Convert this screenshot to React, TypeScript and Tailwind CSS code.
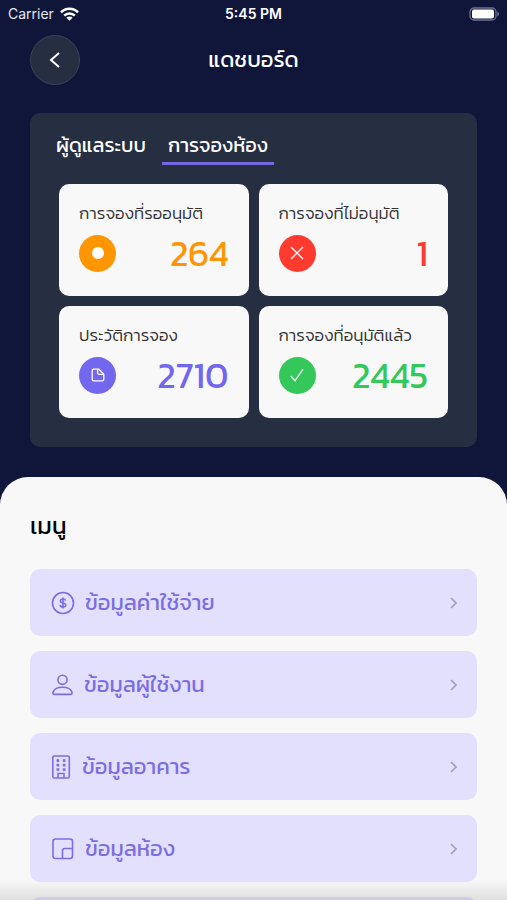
import type { ReactNode } from "react";

const stats = [
  { id: "pending", label: "การจองที่รออนุมัติ", value: 264, text: "text-[#ff9500]", bg: "bg-[#ff9500]" },
  { id: "rejected", label: "การจองที่ไม่อนุมัติ", value: 1, text: "text-[#ff3b30]", bg: "bg-[#ff3b30]" },
  { id: "history", label: "ประวัติการจอง", value: 2710, text: "text-[#7367f0]", bg: "bg-[#7367f0]" },
  { id: "approved", label: "การจองที่อนุมัติแล้ว", value: 2445, text: "text-[#34c759]", bg: "bg-[#34c759]" },
];

const statIcons: Record<string, ReactNode> = {
  pending: <circle cx="8" cy="8" r="6" fill="currentColor" stroke="none" />,
  rejected: <path d="M2 2l12 12M14 2L2 14" />,
  history: (
    <>
      <path d="M2.2 3.6c0-.8.6-1.4 1.4-1.4h5.2l5 5v5.2c0 .8-.6 1.4-1.4 1.4H3.6c-.8 0-1.4-.6-1.4-1.4z" />
      <path d="M7.6 2.4v3.4c0 .9.6 1.5 1.5 1.5h4.4" />
    </>
  ),
  approved: <path d="M2 9l4 4.8L14 2.2" />,
};

const menu = [
  { id: "expense", label: "ข้อมูลค่าใช้จ่าย", iconWidth: 24 },
  { id: "users", label: "ข้อมูลผู้ใช้งาน", iconWidth: 23 },
  { id: "building", label: "ข้อมูลอาคาร", iconWidth: 21 },
  { id: "room", label: "ข้อมูลห้อง", iconWidth: 24 },
];

const menuIcons: Record<string, ReactNode> = {
  expense: (
    <>
      <circle cx="12" cy="12" r="10.5" />
      <path d="M14.6 9.7c-.2-1-1.2-1.7-2.6-1.7s-2.6.7-2.6 1.9c0 2.7 5.4 1.4 5.4 4.100 0 1.200-1.200 2-2.800 2s-2.700-.8-2.900-2M12 6.400v11.200" />
    </>
  ),
  users: (
    <>
      <circle cx="11.500" cy="6.800" r="4.600" />
      <path d="M3.700 21.400h15.600c1.500 0 2-.9 1.700-2.100-.9-3-4.700-5-9.500-5s-8.600 2-9.500 5c-.3 1.200.2 2.100 1.700 2.100z" />
    </>
  ),
  building: (
    <>
      <rect x="1.800" y="1" width="16.500" height="22" rx="1.500" />
      <path d="M7 23v-4.500h6V23" />
      <path
        d="M5.800 4.500H8v2.200H5.800zM12 4.500h2.200v2.200H12zM5.800 9H8v2.200H5.800zM12 9h2.200v2.200H12zM5.800 13.500H8v2.200H5.800zM12 13.500h2.200v2.200H12z"
        fill="currentColor"
        strokeWidth="0.5"
      />
    </>
  ),
  room: (
    <>
      <rect x="2" y="2" width="19.500" height="19.500" rx="2.500" />
      <path d="M11.500 21.500v-8c0-1.200.8-2 2-2h8" />
    </>
  ),
};

function StatusBar() {
  return (
    <div className="grid grid-cols-3 items-center h-7 px-2 text-sm font-['Inter',sans-serif]">
      <div className="flex items-center gap-1.5">
        <span className="text-gray-200">Carrier</span>
        <svg width="19" height="14" viewBox="0 0 19 14" fill="none" stroke="currentColor" strokeWidth="2.6">
          <path d="M1 5.300a12 12 0 0 1 17 0" />
          <path d="M4.200 8.700a7.500 7.500 0 0 1 10.600 0" />
          <path d="M9.500 13.800L6.400 10.700a4.400 4.400 0 0 1 6.200 0z" fill="currentColor" stroke="none" />
        </svg>
      </div>
      <span className="text-center font-semibold">5:45 PM</span>
      <svg className="justify-self-end" width="31" height="15" viewBox="0 0 31 15" fill="none">
        <rect x="2" y="1" width="26" height="12" rx="4" stroke="#6e708c" strokeWidth="1.3" />
        <rect x="4" y="2.5" width="22" height="9" rx="2" fill="#fff" />
        <path d="M29.3 4.500v5c1-.4 1.700-1.300 1.700-2.500s-.7-2.100-1.700-2.500z" fill="#6e708c" />
      </svg>
    </div>
  );
}

export default function App() {
  return (
    <div className="relative flex flex-col h-screen overflow-hidden bg-[#10153a] text-white font-['Kanit','Prompt','Noto_Sans_Thai',sans-serif]">
      <StatusBar />

      <header className="grid grid-cols-[50px_1fr_50px] items-center px-[30px] pt-[7px]">
        <button
          aria-label="ย้อนกลับ"
          className="flex items-center justify-center size-[50px] rounded-full bg-[#262e42] border border-[#3a4157]"
        >
          <svg width="24" height="24" viewBox="0 0 24 24" fill="none" stroke="currentColor" strokeWidth="2">
            <path d="M16 5l-8 7 8 7" />
          </svg>
        </button>
        <h1 className="text-center text-[22px] leading-8">แดชบอร์ด</h1>
      </header>

      {/* Booking summary */}
      <section className="mx-[30px] mt-7 pb-[29px] rounded-[10px] bg-[#262e42]">
        <div className="flex gap-[10px] px-5 pt-[14px]">
          <button className="px-1.5 h-[38px] text-[20px] border-b-3 border-transparent">ผู้ดูแลระบบ</button>
          <button className="px-1.5 h-[38px] text-[20px] border-b-3 border-[#7367e0]">การจองห้อง</button>
        </div>
        <div className="grid grid-cols-2 gap-[10px] px-[29px] pt-[19px]">
          {stats.map((s) => (
            <div key={s.id} className="h-[112px] px-5 pt-[17px] rounded-[10px] bg-[#f8f8f8]">
              <p className="text-[17px] leading-6 font-light text-[#333] whitespace-nowrap">{s.label}</p>
              <div className={`flex items-center justify-between mt-2 ${s.text}`}>
                <span className={`flex items-center justify-center size-[37px] rounded-full text-white ${s.bg}`}>
                  <svg width="16" height="16" viewBox="0 0 16 16" fill="none" stroke="currentColor" strokeWidth="1.3">
                    {statIcons[s.id]}
                  </svg>
                </span>
                <span className="text-[36px] leading-10">{s.value}</span>
              </div>
            </div>
          ))}
        </div>
      </section>

      {/* Menu sheet */}
      <main className="flex-1 min-h-0 mt-[30px] px-[30px] pt-[33px] rounded-t-[28px] bg-[#f8f8f8] overflow-hidden">
        <h2 className="text-[24px] leading-8 text-black">เมนู</h2>
        <nav className="flex flex-col gap-[15px] mt-[27px]">
          {menu.map((m) => (
            <a
              key={m.id}
              href="#"
              className="flex items-center gap-[10px] h-[67px] pl-[21px] pr-5 rounded-[10px] bg-[#e3e0fe] text-[#7b6ee2]"
            >
              <svg
                width={m.iconWidth}
                height="24"
                viewBox={`0 0 ${m.iconWidth} 24`}
                fill="none"
                stroke="currentColor"
                strokeWidth="1.6"
              >
                {menuIcons[m.id]}
              </svg>
              <span className="flex-1 text-[22px] leading-8">{m.label}</span>
              <svg width="8" height="12" viewBox="0 0 8 12" fill="none" stroke="#a29fb8" strokeWidth="1.6">
                <path d="M2 1l5 5-5 5" />
              </svg>
            </a>
          ))}
          <div className="h-[67px] rounded-[10px] bg-[#e3e0fe]" />
        </nav>
      </main>

      <div className="absolute inset-x-0 bottom-0 h-5 bg-linear-to-t from-black/10 to-transparent" />
    </div>
  );
}
